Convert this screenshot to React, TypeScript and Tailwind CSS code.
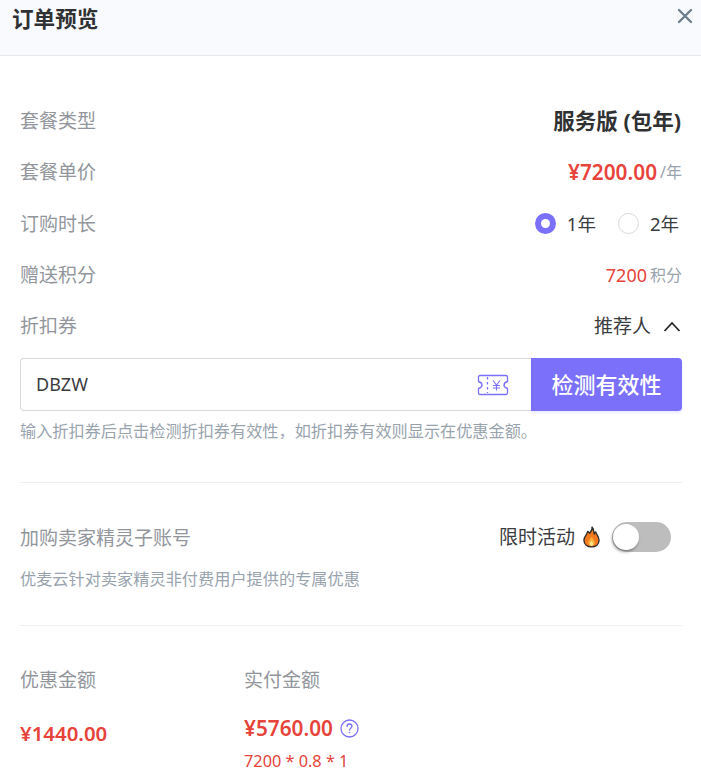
const FONT = "font-['Noto_Sans','Noto_Sans_CJK_SC',sans-serif]";

function Row({ label, children, className = "h-[51.5px]" }: { label: string; children: React.ReactNode; className?: string }) {
  return (
    <div className={`flex items-center justify-between ${className}`}>
      <span className="text-[19px] text-[#92969c]">{label}</span>
      <div className="flex items-center">{children}</div>
    </div>
  );
}

function Radio({ checked, label }: { checked?: boolean; label: string }) {
  return (
    <div className="flex items-center">
      {checked ? (
        <span className="flex size-[21px] items-center justify-center rounded-full bg-[#7a70fa]">
          <span className="size-[9px] rounded-full bg-white" />
        </span>
      ) : (
        <span className="size-[21px] rounded-full border border-[#d9d9d9] bg-white" />
      )}
      <span className="ml-[11px] text-[18.5px] text-[#3a3c40]">{label}</span>
    </div>
  );
}

function TicketIcon() {
  return (
    <svg width="32" height="22" viewBox="0 0 32 22" fill="none" stroke="#7a70fa" strokeWidth="1.3">
      <path d="M3 1.5H29C30 1.5 30.5 2 30.5 3V7.5C28 8.2 27 9.5 27 11C27 12.5 28 13.8 30.5 14.5V19C30.5 20 30 20.5 29 20.5H3C2 20.5 1.5 20 1.5 19V14.5C4 13.8 5 12.5 5 11C5 9.5 4 8.2 1.5 7.5V3C1.5 2 2 1.5 3 1.5Z" strokeLinejoin="round" />
      <path d="M10.5 3V19" strokeDasharray="2.5 2.5" />
      <path d="M16 6.5L19.5 11L23 6.5M19.5 11V16.5M16 11.5H23M16 14H23" strokeWidth="1.1" />
    </svg>
  );
}

function FlameIcon() {
  return (
    <svg width="17" height="22" viewBox="0 0 18 23">
      <path d="M9.5 1C10.5 4 8.5 5.5 7 7.5C6.5 6.5 6 6 5 5.5C5 8 1 10.5 1 15C1 19.5 4.5 22 9 22C13.5 22 17 19.5 17 15C17 10 13.5 8.5 13.5 6C12.5 6.5 12 7.5 12 8.5C11 6 12 3 9.5 1Z" fill="#f4791f" stroke="#2b2b2b" strokeWidth="1.4" strokeLinejoin="round" />
      <path d="M9 11C9.5 13 12.5 14.5 12.5 17.5C12.5 19.5 11 21 9 21C7 21 5.5 19.5 5.5 17.5C5.5 15 8 14 9 11Z" fill="#fbb03b" />
      <path d="M9 15.5C9.5 16.5 10.8 17.5 10.8 18.8C10.8 20 10 20.8 9 20.8C8 20.8 7.2 20 7.2 18.8C7.2 17.5 8.5 16.5 9 15.5Z" fill="#fde68a" />
    </svg>
  );
}

export default function App() {
  return (
    <div className={`h-[779px] w-[701px] overflow-hidden bg-white ${FONT}`}>
      {/* Header */}
      <div className="flex h-[56px] items-start justify-between border-b border-[#e6e8ee] bg-[#f9fafe] pl-[12px] pr-[8px]">
        <span className="text-[21.6px] leading-[38px] font-bold text-[#303133]">订单预览</span>
        <svg className="mt-[8px]" width="16" height="16" viewBox="0 0 16 16" stroke="#6d7f8c" strokeWidth="2.4" strokeLinecap="round">
          <path d="M2 2L14 14M14 2L2 14" />
        </svg>
      </div>

      <div className="pl-[20px] pr-[19px] pt-[39px]">
        <Row label="套餐类型">
          <span className="pr-[1px] text-[21.5px] font-bold text-[#303133]">服务版 (包年)</span>
        </Row>
        <Row label="套餐单价">
          <span className="text-[20.8px] font-semibold text-[#e6433a]">¥7200.00</span>
          <span className="ml-[3px] text-[16px] text-[#98a3ae]">/年</span>
        </Row>
        <Row label="订购时长">
          <div className="flex gap-[22px] pr-[3px]">
            <Radio checked label="1年" />
            <Radio label="2年" />
          </div>
        </Row>
        <Row label="赠送积分">
          <span className="text-[18px] text-[#e6433a]">7200</span>
          <span className="ml-[3px] text-[16px] text-[#98a3ae]">积分</span>
        </Row>
        <Row label="折扣券" className="h-[50.5px]">
          <span className="text-[19px] text-[#3a3c40]">推荐人</span>
          <svg className="ml-[12px] mr-[1px]" width="18" height="11" viewBox="0 0 18 11" fill="none" stroke="#222" strokeWidth="1.7">
            <path d="M1.5 10L9 2L16.5 10" />
          </svg>
        </Row>

        {/* Coupon input */}
        <div className="mt-[6.5px] flex h-[53px]">
          <div className="flex flex-1 items-center justify-between rounded-l-[4px] border border-r-0 border-[#d9d9d9] pl-[15px] pr-[22px]">
            <span className="text-[18px] text-[#3a3c40]">DBZW</span>
            <TicketIcon />
          </div>
          <button className="w-[151px] rounded-r-[4px] bg-[#7a70fa] text-[22px] font-medium text-white shadow-[0_2px_3px_rgba(122,112,250,0.15)]">
            检测有效性
          </button>
        </div>
        <p className="mt-[8px] text-[16.16px] leading-[24px] text-[#98a3ae]">
          输入折扣券后点击检测折扣券有效性，如折扣券有效则显示在优惠金额。
        </p>

        <div className="mt-[39px] border-t border-[#eeeff2]" />

        {/* Add-on */}
        <div className="mt-[38px] flex h-[32px] items-center justify-between">
          <span className="pt-[2px] text-[19px] text-[#92969c]">加购卖家精灵子账号</span>
          <div className="flex items-center pr-[11px]">
            <span className="text-[19px] text-[#3a3c40]">限时活动</span>
            <span className="ml-[8px] flex"><FlameIcon /></span>
            <div className="ml-[12px] flex h-[30px] w-[59px] items-center rounded-full bg-[#bdbdbd] pl-[1px]">
              <span className="size-[26px] rounded-full bg-white shadow-[-1px_2px_3px_rgba(0,0,0,0.35)]" />
            </div>
          </div>
        </div>
        <p className="mt-[14px] text-[16.2px] leading-[24px] text-[#98a3ae]">优麦云针对卖家精灵非付费用户提供的专属优惠</p>

        <div className="mt-[34px] border-t border-[#eeeff2]" />

        {/* Totals */}
        <div className="mt-[40px] flex">
          <div className="w-[224px]">
            <div className="text-[19px] leading-[28px] text-[#92969c]">优惠金额</div>
            <div className="mt-[23px] text-[20.4px] leading-[32px] font-semibold text-[#e6433a]">¥1440.00</div>
          </div>
          <div>
            <div className="text-[19px] leading-[28px] text-[#92969c]">实付金额</div>
            <div className="mt-[18px] flex items-center">
              <span className="text-[20.8px] leading-[32px] font-semibold text-[#e6433a]">¥5760.00</span>
              <svg className="ml-[7px]" width="19" height="19" viewBox="0 0 19 19" fill="none" stroke="#7a70fa" strokeWidth="1.3">
                <circle cx="9.5" cy="9.5" r="8.5" />
                <path d="M7 7.5C7 6 8.2 5 9.5 5C10.8 5 12 6 12 7.3C12 9 9.5 9.3 9.5 11" strokeLinecap="round" />
                <circle cx="9.5" cy="13.5" r="0.8" fill="#7a70fa" stroke="none" />
              </svg>
            </div>
            <div className="mt-[5px] text-[16.3px] leading-[24px] text-[#e6433a]">7200 * 0.8 * 1</div>
          </div>
        </div>
      </div>
    </div>
  );
}
